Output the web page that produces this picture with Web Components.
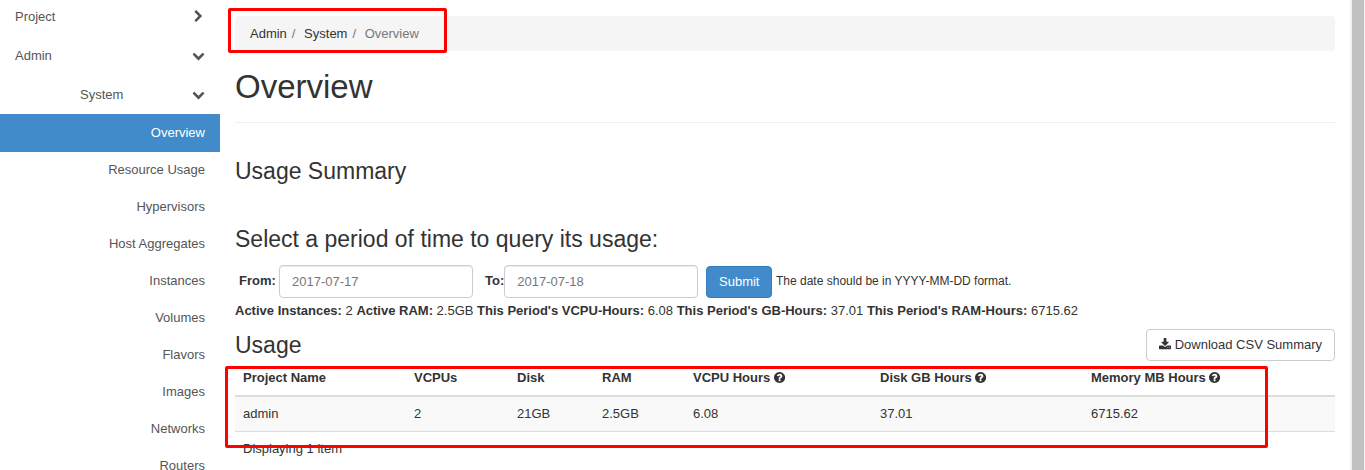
<!DOCTYPE html>
<html lang="en">
<head>
<meta charset="utf-8">
<title>Overview</title>
<style>
html,body{margin:0;height:100%;overflow:hidden;background:#fff}
body{font:13px/18px "Liberation Sans",Arial,sans-serif;color:#333}
</style>
</head>
<body>
<usage-page></usage-page>
<script>
const ICONS = {
  right: [0, 1792, 'M1363 877l-742 742q-19 19-45 19t-45-19l-166-166q-19-19-19-45t19-45l531-531-531-531q-19-19-19-45t19-45l166-166q19-19 45-19t45 19l742 742q19 19 19 45t-19 45z'],
  down: [0, 1792, 'M1683 808l-742 741q-19 19-45 19t-45-19l-742-741q-19-19-19-45.5t19-45.5l166-165q19-19 45-19t45 19l531 531 531-531q19-19 45-19t45 19l166 165q19 19 19 45.5t-19 45.5z'],
  help: [128, 1536, 'M1024 1376v-192q0-14-9-23t-23-9h-192q-14 0-23 9t-9 23v192q0 14 9 23t23 9h192q14 0 23-9t9-23zm256-672q0-88-55.5-163t-138.5-116-170-41q-243 0-371 213-15 24 8 42l132 100q7 6 19 6 16 0 25-12 53-68 86-92 34-24 86-24 48 0 85.5 26t37.5 59q0 38-20 61t-68 45q-63 28-115.5 86.5t-52.5 125.5v36q0 14 9 23t23 9h192q14 0 23-9t9-23q0-19 21.5-49.5t54.5-49.5q32-18 49-28.5t46-35 44.5-48 28-60.5 12.5-81zm384 192q0 209-103 385.5t-279.5 279.5-385.5 103-385.5-103-279.5-279.5-103-385.5 103-385.5 279.5-279.5 385.5-103 385.5 103 279.5 279.5 103 385.5z'],
  download: [64, 1664, 'M1344 1344q0-26-19-45t-45-19-45 19-19 45 19 45 45 19 45-19 19-45zm256 0q0-26-19-45t-45-19-45 19-19 45 19 45 45 19 45-19 19-45zm128-224v320q0 40-28 68t-68 28h-1472q-40 0-68-28t-28-68v-320q0-40 28-68t68-28h465l135 136q58 56 136 56t136-56l136-136h464q40 0 68 28t28 68zm-325-569q17 41-14 70l-448 448q-18 19-45 19t-45-19l-448-448q-31-29-14-70 17-39 59-39h256v-448q0-26 19-45t45-19h256q26 0 45 19t19 45v448h256q42 0 59 39z']
};
function define(name, render) {
  customElements.define(name, class extends HTMLElement {
    connectedCallback() {
      if (!this.shadowRoot) this.attachShadow({mode: 'open'}).innerHTML = render(this);
    }
  });
}
define('ui-icon', el => {
  const [x, w, d] = ICONS[el.getAttribute('name')];
  return `<style>:host{display:inline-block;height:13px;vertical-align:-2px}svg{display:block;width:${(w / 1792 * 13).toFixed(2)}px;height:13px;fill:currentColor}</style>
<svg viewBox="${x} 0 ${w} 1792"><path d="${d}"/></svg>`;
});

define('nav-group', el => `<style>:host{display:flex;justify-content:space-between;align-items:center;height:39px;line-height:39px;color:#555;padding:0 15px}
:host([nested]){padding-left:80px}</style>
<span><slot></slot></span><ui-icon name="${el.getAttribute('icon')}"></ui-icon>`);

define('nav-item', () => `<style>:host{display:block;height:37px;line-height:37px;text-align:right;padding:0 15px;color:#555}
:host([active]){height:38px;line-height:38px;background:#428bca;color:#fff;margin-bottom:-1px}</style><slot></slot>`);

define('side-nav', () => `<style>:host{display:block;width:220px;flex:none;margin-top:-3px}</style>
<nav-group icon="right">Project</nav-group><nav-group icon="down">Admin</nav-group><nav-group icon="down" nested>System</nav-group>
<nav-item active>Overview</nav-item>
${['Resource Usage','Hypervisors','Host Aggregates','Instances','Volumes','Flavors','Images','Networks','Routers'].map(t => `<nav-item>${t}</nav-item>`).join('')}`);

define('bread-crumb', () => `<style>:host{display:flex;height:35px;line-height:35px;margin-top:16px;padding:0 15px;background:#f5f5f5;border-radius:4px}
i{font-style:normal;color:#777;padding:0 5px;white-space:pre}.here{color:#777}</style>
<span>Admin</span><i>/&nbsp;</i><span>System</span><i>/&nbsp;</i><span class="here">Overview</span>`);

define('page-heading', () => `<style>:host{display:block;margin-top:17px;height:54px;border-bottom:1px solid #eee}
h1{margin:0;font-weight:400;font-size:33px;line-height:37px}</style><h1><slot></slot></h1>`);

define('section-heading', () => `<style>:host{display:block}h3{margin:0;font-weight:400;font-size:23px;line-height:26px}</style><h3><slot></slot></h3>`);

define('date-field', el => `<style>:host{display:flex}label{font-weight:700;line-height:31px}
.box{box-sizing:border-box;width:194px;height:33px;line-height:32px;border:1px solid #ccc;border-radius:4px;padding:0 12px;color:#777;box-shadow:inset 0 1px 1px rgba(0,0,0,.075)}</style>
<label><slot></slot></label><div class="box">${el.getAttribute('value')}</div>`);

define('ui-button', () => `<style>:host{display:block;box-sizing:border-box;height:32px;line-height:30px;padding:0 12px;border:1px solid #ccc;border-radius:4px;background:#fff;white-space:nowrap}
:host([primary]){background:#428bca;border-color:#357ebd;color:#fff}</style><slot></slot>`);

define('period-form', () => `<style>:host{display:flex;height:33px;margin-top:13px;padding-left:4px}
.from{width:234px;justify-content:space-between}.to{width:213px;margin-left:12px;justify-content:space-between}
ui-button{margin:1px 0 0 8px;width:66px}.hint{font-size:12px;line-height:33px;margin-left:4px}</style>
<date-field class="from" value="2017-07-17">From:</date-field><date-field class="to" value="2017-07-18">To:</date-field>
<ui-button primary>Submit</ui-button><span class="hint">The date should be in YYYY-MM-DD format.</span>`);

define('usage-stats', () => `<style>:host{display:block;margin-top:4px;line-height:17px;height:17px;white-space:nowrap}</style>
<b>Active Instances:</b> 2 <b>Active RAM:</b> 2.5GB <b>This Period's VCPU-Hours:</b> 6.08 <b>This Period's GB-Hours:</b> 37.01 <b>This Period's RAM-Hours:</b> 6715.62`);

define('usage-table', () => `<style>:host{display:block}.row{display:grid;grid-template-columns:171px 103px 85px 91px 187px 211px 1fr;padding-left:8px;white-space:nowrap}
.head{font-weight:700;height:34px;line-height:33px;border-bottom:2px solid #ddd}
.data{height:34px;line-height:33px;background:#f9f9f9;border-bottom:1px solid #ddd}.foot{padding-left:8px;line-height:33px}</style>
<div class="row head"><span>Project Name</span><span>VCPUs</span><span>Disk</span><span>RAM</span><span>VCPU Hours <ui-icon name="help"></ui-icon></span><span>Disk GB Hours <ui-icon name="help"></ui-icon></span><span>Memory MB Hours <ui-icon name="help"></ui-icon></span></div>
<div class="row data"><span>admin</span><span>2</span><span>21GB</span><span>2.5GB</span><span>6.08</span><span>37.01</span><span>6715.62</span></div>
<div class="foot">Displaying 1 item</div>`);

define('scroll-bar', () => `<style>:host{display:block;box-sizing:border-box;width:15px;flex:none;height:470px;background:#f1f1f1;padding:0 1px 0 2px}div{height:100%;background:#c1c1c1}</style><div></div>`);

define('mark-box', () => `<style>:host{display:block;position:absolute;box-sizing:border-box;border:3px solid #f00;border-radius:2px}</style>`);

define('usage-page', () => `<style>:host{display:flex;position:relative;width:1365px;height:470px;overflow:hidden}
main{flex:1;padding:0 15px;min-width:0}
.summary{margin-top:35px}.select{margin-top:42px}
.bar{display:flex;justify-content:space-between;height:32px;margin-top:10px}.bar section-heading{margin-top:3px}
ui-button{width:189px}
.m1{left:228px;top:8px;width:219px;height:45px}.m2{left:225px;top:366px;width:1043px;height:82px}</style>
<side-nav></side-nav>
<main><bread-crumb></bread-crumb><page-heading>Overview</page-heading>
<section-heading class="summary">Usage Summary</section-heading>
<section-heading class="select">Select a period of time to query its usage:</section-heading>
<period-form></period-form><usage-stats></usage-stats>
<div class="bar"><section-heading>Usage</section-heading><ui-button><ui-icon name="download"></ui-icon> Download CSV Summary</ui-button></div>
<usage-table></usage-table></main>
<scroll-bar></scroll-bar><mark-box class="m1"></mark-box><mark-box class="m2"></mark-box>`);
</script>
</body>
</html>
